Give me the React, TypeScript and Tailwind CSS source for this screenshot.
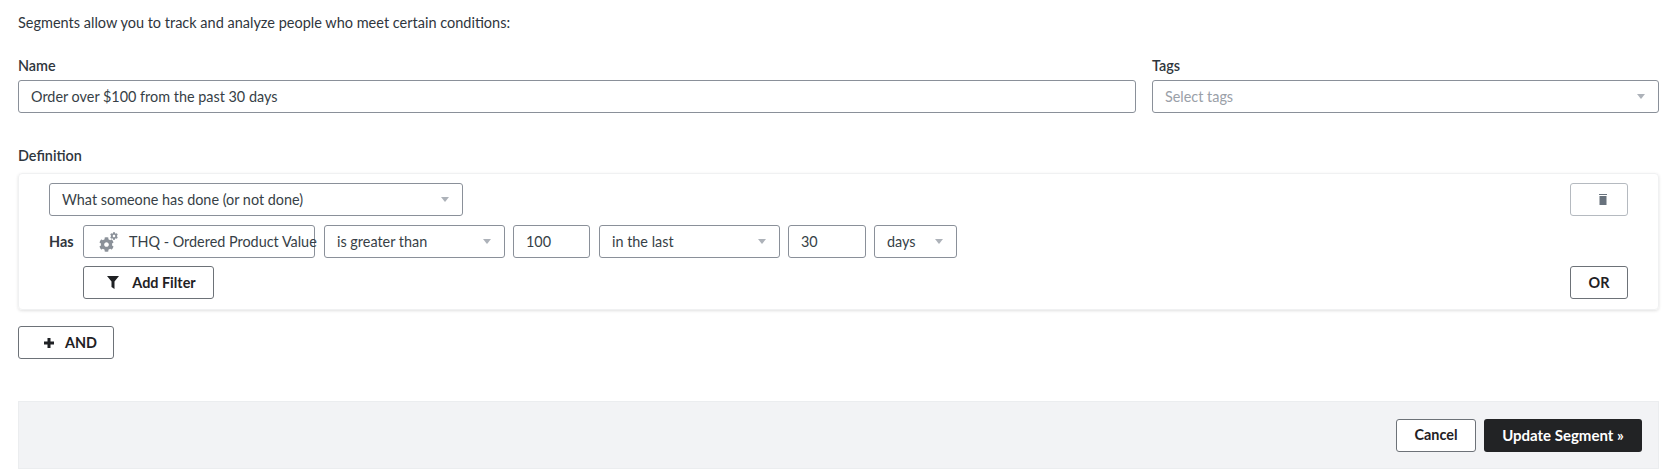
import React from 'react';
import { FaCog } from 'react-icons/fa';

const FONT = "font-['Lato','Liberation_Sans',sans-serif]";

// Small grey caret used by every select
const Caret = () => <span className="h-0 w-0 border-x-[4px] border-t-[5px] border-x-transparent border-t-[#adb2b9]" />;

type SelectProps = {
  label: string;
  width: string;
  placeholder?: boolean;
};

const SelectBox: React.FC<SelectProps> = ({ label, width, placeholder }) => (
  <div className={`flex h-[33px] items-center justify-between rounded-[3px] border border-[#8a9099] bg-white pl-[12px] pr-[13px] ${width} ${placeholder ? 'text-[#9aa0a8]' : 'text-[#373f47]'}`}>
    <span>{label}</span>
    <Caret />
  </div>
);

const ValueBox: React.FC<{ value: string; width: string }> = ({ value, width }) => (
  <div className={`flex h-[33px] items-center rounded-[3px] border border-[#8a9099] bg-white pl-[12px] text-[#373f47] ${width}`}>{value}</div>
);

const OutlineButton: React.FC<{ className?: string; children: React.ReactNode }> = ({ className = '', children }) => (
  <button className={`flex h-[33px] items-center justify-center rounded-[3px] border border-[#6d7278] bg-white font-bold text-[#1f2124] ${className}`}>
    {children}
  </button>
);

export default function App() {
  return (
    <div className={`min-h-[472px] bg-white pl-[18px] pr-[8px] pt-[14px] text-[14.4px] text-[#373f47] ${FONT}`}>
      <p className="h-[17px] text-[14.5px] leading-[17px] text-[#2f363d]">Segments allow you to track and analyze people who meet certain conditions:</p>

      <div className="mt-[26px] flex gap-[16px]">
        <div className="w-[1118px]">
          <label className="block h-[23px] font-semibold leading-[17px] text-[#2f363d]">Name</label>
          <div className="flex h-[33px] items-center rounded-[3px] border border-[#8a9099] pl-[12px]">Order over $100 from the past 30 days</div>
        </div>
        <div className="flex-1">
          <label className="block h-[23px] font-semibold leading-[17px] text-[#2f363d]">Tags</label>
          <SelectBox label="Select tags" width="w-full" placeholder />
        </div>
      </div>

      <label className="mt-[34px] block h-[26px] font-semibold leading-[17px] text-[#2f363d]">Definition</label>

      <div className="h-[137px] rounded-[4px] border border-[#f0f1f2] pl-[30px] pr-[30px] pt-[9px] shadow-[0_1px_3px_rgba(0,0,0,0.12)]">
        <div className="flex items-start justify-between">
          <SelectBox label="What someone has done (or not done)" width="w-[414px]" />
          <button className="flex h-[33px] w-[58px] items-center justify-center rounded-[3px] border border-[#b5bac0] bg-white pl-[8px]">
            <svg width="8" height="11" viewBox="0 0 8 11" fill="#68727d">
              <rect x="0" y="0" width="8" height="1" />
              <rect x="0.5" y="2" width="7" height="9" />
            </svg>
          </button>
        </div>

        <div className="mt-[9px] flex items-center">
          <span className="w-[34px] font-bold text-[#2f363d]">Has</span>
          <div className="flex h-[33px] w-[232px] items-center whitespace-nowrap rounded-[3px] border border-[#8a9099] pl-[15px]">
            <span className="relative mr-[11px] h-[20px] w-[19px] shrink-0 text-[#8b9199]">
              <FaCog className="absolute bottom-0 left-0 h-[15px] w-[15px]" />
              <FaCog className="absolute right-0 top-0 h-[8px] w-[8px]" />
            </span>
            <span>THQ - Ordered Product Value</span>
          </div>
          <div className="ml-[9px] flex items-center gap-[8px]">
            <SelectBox label="is greater than" width="w-[181px]" />
            <ValueBox value="100" width="w-[77px]" />
            <div className="ml-[1px]">
              <SelectBox label="in the last" width="w-[181px]" />
            </div>
            <ValueBox value="30" width="w-[78px]" />
            <SelectBox label="days" width="w-[83px]" />
          </div>
        </div>

        <div className="mt-[8px] flex justify-between pl-[34px]">
          <OutlineButton className="w-[131px] gap-[13px] pl-[6px]">
            <svg width="12" height="13" viewBox="0 0 12 13" fill="currentColor">
              <polygon points="0,0 12,0 7.5,5.5 7.5,13 4.5,11 4.5,5.5" />
            </svg>
            Add Filter
          </OutlineButton>
          <OutlineButton className="w-[58px]">OR</OutlineButton>
        </div>
      </div>

      <OutlineButton className="mt-[16px] w-[96px] gap-[11px] pl-[9px]">
        <svg width="10" height="10" viewBox="0 0 10 10" fill="currentColor">
          <rect x="3.5" y="0" width="3" height="10" />
          <rect x="0" y="3.5" width="10" height="3" />
        </svg>
        AND
      </OutlineButton>

      <div className="mt-[42px] flex h-[68px] items-center justify-end gap-[8px] border border-[#ebedef] bg-[#f2f3f5] pr-[16px]">
        <OutlineButton className="w-[80px]">Cancel</OutlineButton>
        <button className="flex h-[33px] w-[158px] items-center justify-center rounded-[3px] bg-[#222325] text-[15px] font-bold text-white">Update Segment »</button>
      </div>
    </div>
  );
}
